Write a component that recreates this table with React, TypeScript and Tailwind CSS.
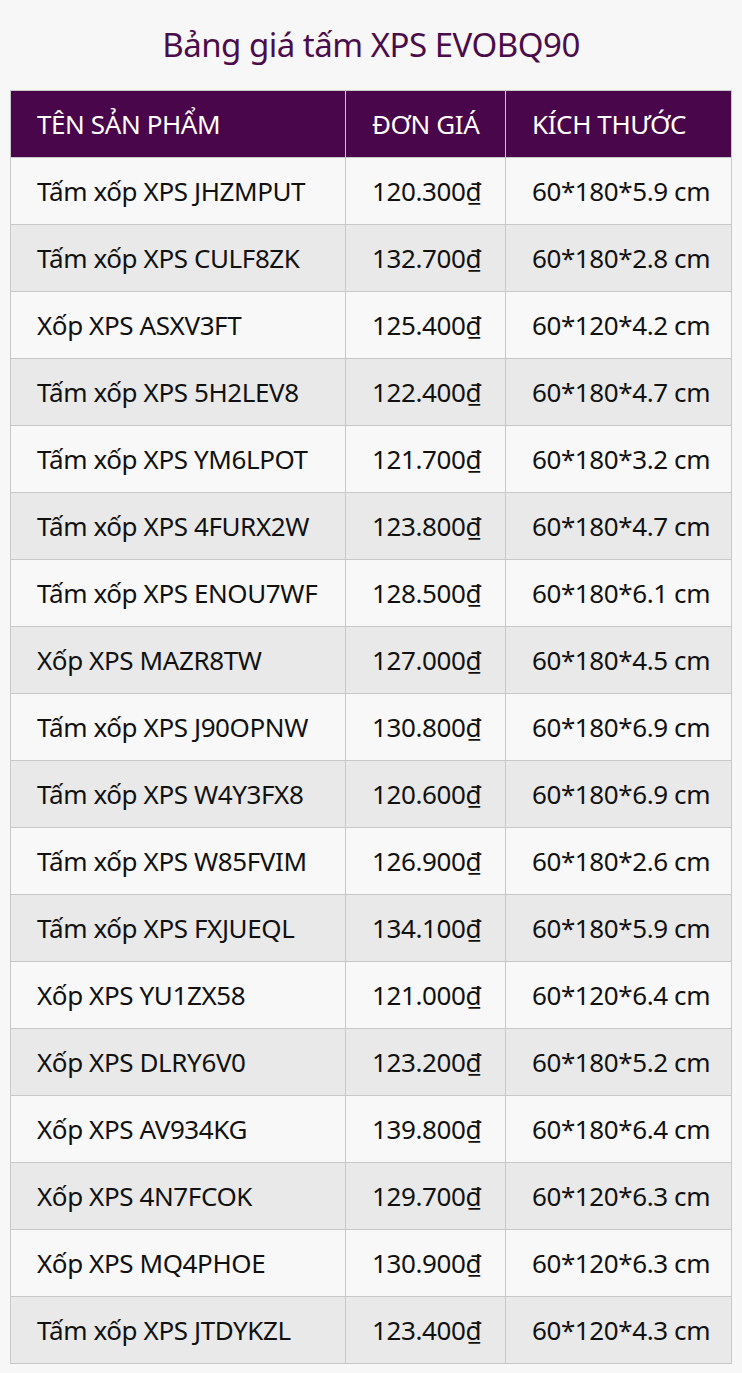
const rows: [string, string, string][] = [
  ['Tấm xốp XPS JHZMPUT', '120.300₫', '60*180*5.9 cm'],
  ['Tấm xốp XPS CULF8ZK', '132.700₫', '60*180*2.8 cm'],
  ['Xốp XPS ASXV3FT', '125.400₫', '60*120*4.2 cm'],
  ['Tấm xốp XPS 5H2LEV8', '122.400₫', '60*180*4.7 cm'],
  ['Tấm xốp XPS YM6LPOT', '121.700₫', '60*180*3.2 cm'],
  ['Tấm xốp XPS 4FURX2W', '123.800₫', '60*180*4.7 cm'],
  ['Tấm xốp XPS ENOU7WF', '128.500₫', '60*180*6.1 cm'],
  ['Xốp XPS MAZR8TW', '127.000₫', '60*180*4.5 cm'],
  ['Tấm xốp XPS J90OPNW', '130.800₫', '60*180*6.9 cm'],
  ['Tấm xốp XPS W4Y3FX8', '120.600₫', '60*180*6.9 cm'],
  ['Tấm xốp XPS W85FVIM', '126.900₫', '60*180*2.6 cm'],
  ['Tấm xốp XPS FXJUEQL', '134.100₫', '60*180*5.9 cm'],
  ['Xốp XPS YU1ZX58', '121.000₫', '60*120*6.4 cm'],
  ['Xốp XPS DLRY6V0', '123.200₫', '60*180*5.2 cm'],
  ['Xốp XPS AV934KG', '139.800₫', '60*180*6.4 cm'],
  ['Xốp XPS 4N7FCOK', '129.700₫', '60*120*6.3 cm'],
  ['Xốp XPS MQ4PHOE', '130.900₫', '60*120*6.3 cm'],
  ['Tấm xốp XPS JTDYKZL', '123.400₫', '60*120*4.3 cm'],
];

export default function App() {
  return (
    <div className="min-h-screen bg-[#f7f7f7] px-[10px] pb-[10px] font-['Noto_Sans',sans-serif]">
      <h1 className="h-[90px] flex items-center justify-center text-[33px] text-[#4b0c4b] tracking-[-0.5px]">
        Bảng giá tấm XPS EVOBQ90
      </h1>
      <table className="w-full border-collapse text-[26px] tracking-[-0.4px]">
        <thead>
          <tr className="h-[67px] bg-[#49064a] text-white">
            <th className="w-[335px] border border-[#c8c8c8] pl-[26px] text-left font-normal">TÊN SẢN PHẨM</th>
            <th className="w-[160px] border border-[#c8c8c8] pl-[26px] text-left font-normal">ĐƠN GIÁ</th>
            <th className="border border-[#c8c8c8] pl-[26px] text-left font-normal">KÍCH THƯỚC</th>
          </tr>
        </thead>
        <tbody className="text-[#111]">
          {rows.map(([name, price, size], i) => (
            <tr key={i} className={`h-[67px] ${i % 2 ? 'bg-[#e9e9e9]' : 'bg-[#f8f8f8]'}`}>
              <td className="border border-[#c8c8c8] pl-[26px]">{name}</td>
              <td className="border border-[#c8c8c8] pl-[26px]">{price}</td>
              <td className="border border-[#c8c8c8] pl-[26px]">{size}</td>
            </tr>
          ))}
        </tbody>
      </table>
    </div>
  );
}
